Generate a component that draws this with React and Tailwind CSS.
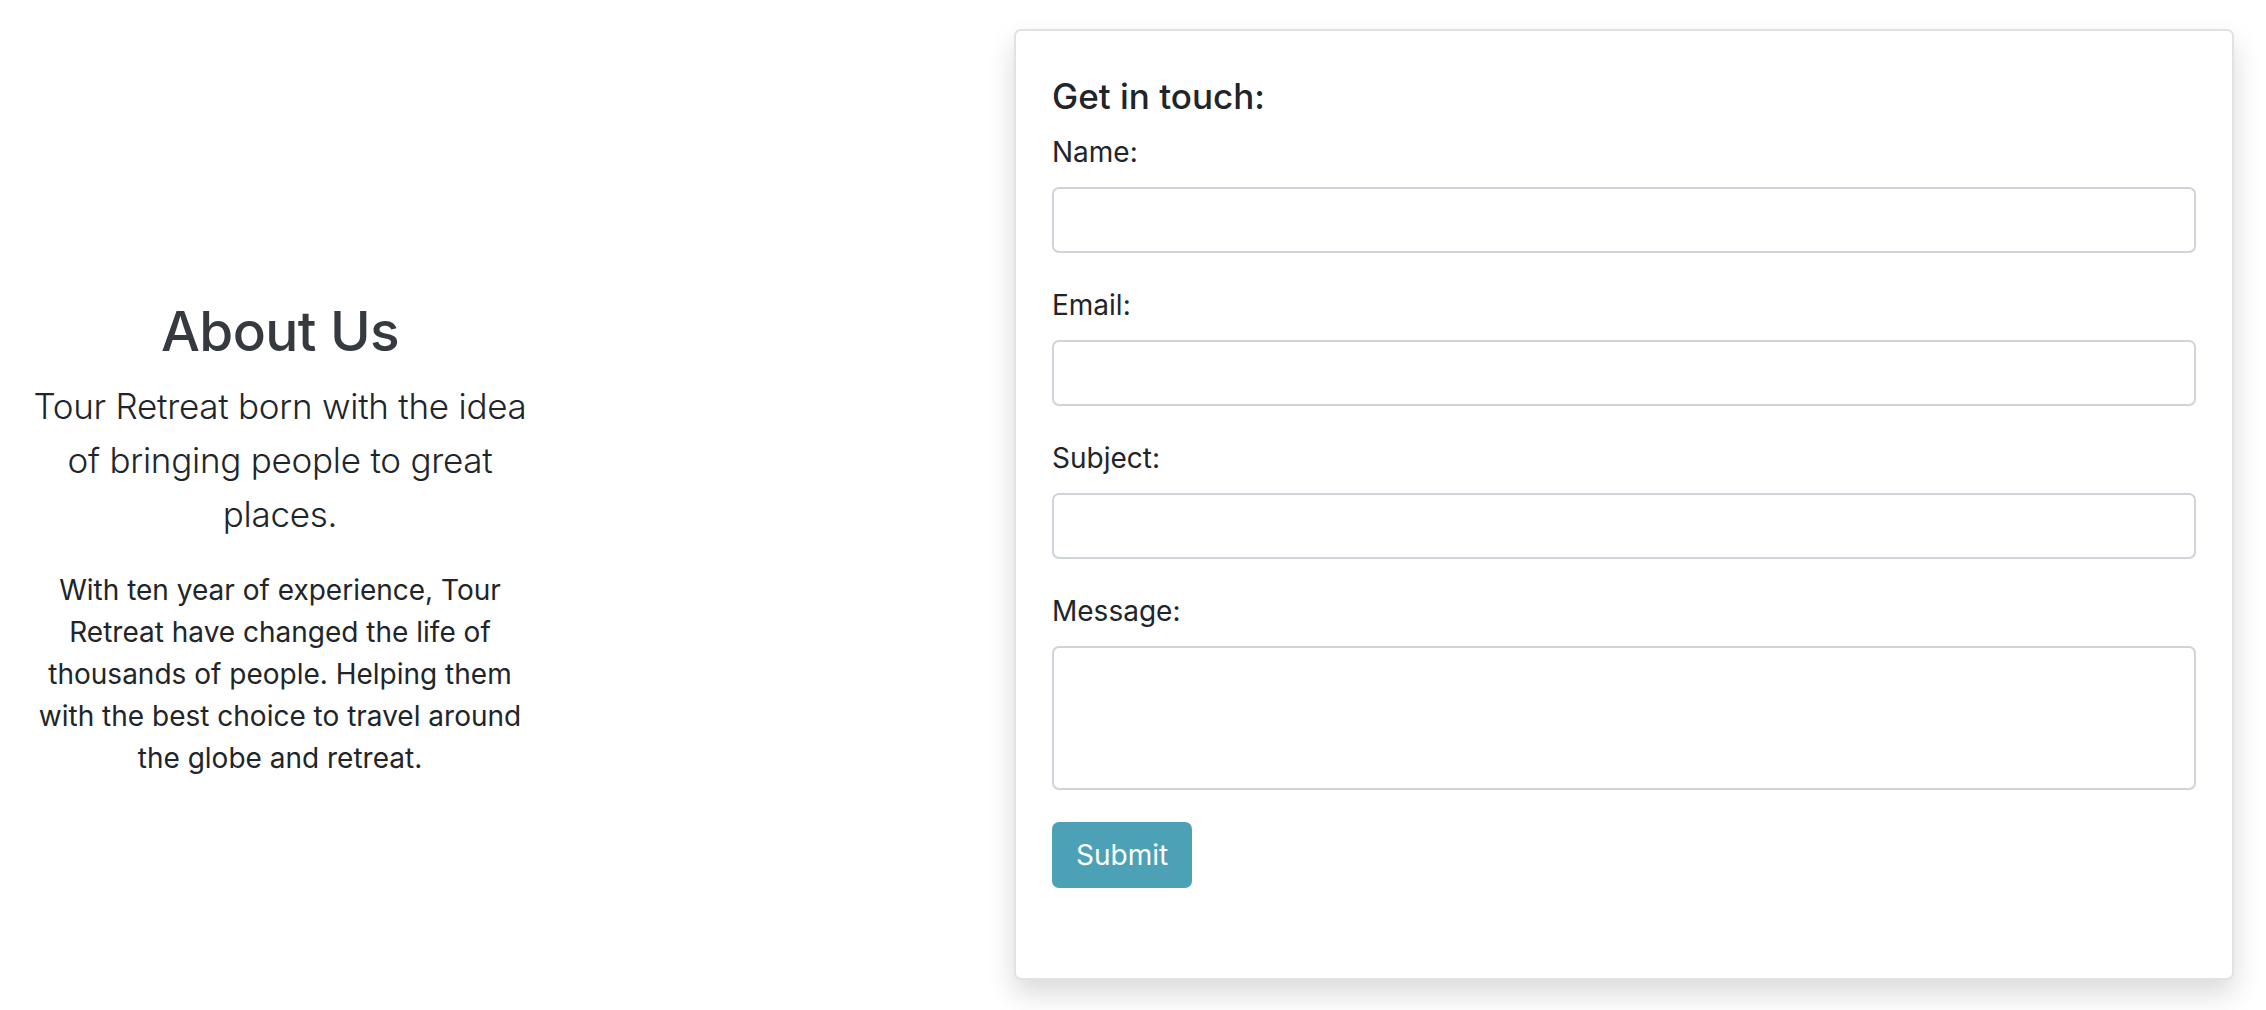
export default function App() {
  const font = { fontFamily: 'Inter, "Noto Sans", sans-serif' };
  const fields = ["Name:", "Email:", "Subject:"];
  return (
    <div className="min-h-[1010px] w-full bg-white flex" style={font}>
      <div className="w-[560px] shrink-0 px-[26px] pt-[298px] text-center">
        <h2 className="text-[55px] leading-[67px] font-medium tracking-[-0.6px] text-[#343a40] mb-[14px]">About Us</h2>
        <p className="text-[35px] leading-[54px] font-light tracking-[-0.25px] text-[#212529] mb-[28px]">
          Tour Retreat born with the idea of bringing people to great places.
        </p>
        <p className="text-[28px] leading-[42px] text-[#212529]">
          With ten year of experience, Tour Retreat have changed the life of thousands of people. Helping them with the best choice to travel around the globe and retreat.
        </p>
      </div>
      <div className="flex-1" />
      <div className="w-[1220px] shrink-0 mt-[29px] mr-[32px] mb-[30px] h-[951px] bg-white border-2 border-[#e2e2e2] rounded-[7px] shadow-[0_14px_28px_rgba(0,0,0,0.15)] px-[36px] pt-[44px]">
        <h5 className="text-[35px] leading-[42px] font-medium text-[#212529] mb-[14px]">Get in touch:</h5>
        {fields.map((f) => (
          <div key={f} className="mb-[31px]">
            <label className="block text-[28px] leading-[42px] text-[#212529] mb-[14px]">{f}</label>
            <input type="text" className="block w-full h-[66px] border-2 border-[#ced4da] rounded-[7px] bg-white" />
          </div>
        ))}
        <div className="mb-[32px]">
          <label className="block text-[28px] leading-[42px] text-[#212529] mb-[14px]">Message:</label>
          <textarea className="block w-full h-[144px] border-2 border-[#ced4da] rounded-[7px] bg-white resize-none" />
        </div>
        <button className="h-[66px] px-[24px] rounded-[7px] bg-[#4ca1b6] text-white text-[28px] leading-[42px]">Submit</button>
      </div>
    </div>
  );
}
